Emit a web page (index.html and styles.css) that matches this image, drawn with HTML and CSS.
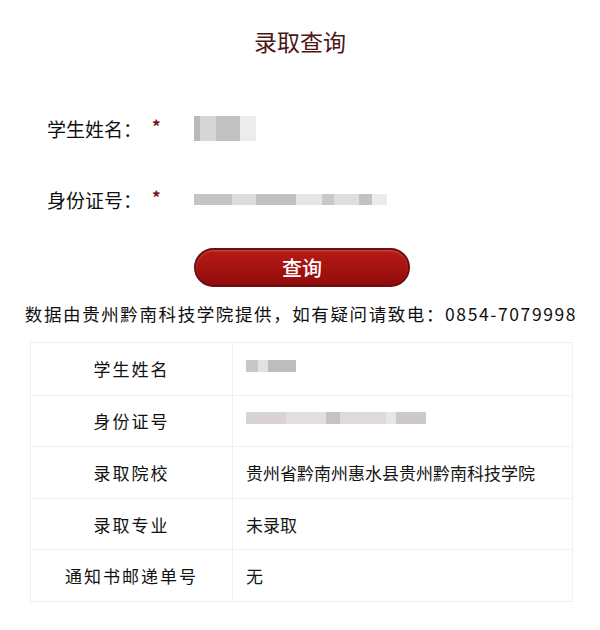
FILE: index.html
```html
<!DOCTYPE html>
<html lang="zh-CN">
<head>
<meta charset="utf-8">
<title>录取查询</title>
<link rel="stylesheet" href="styles.css">
</head>
<body>
<div class="page">
  <h1 class="title">录取查询</h1>
  <div class="form">
    <div class="form-row">
      <span class="label">学生姓名：</span><span class="star">*</span>
      <span class="blur blur-name"></span>
    </div>
    <div class="form-row">
      <span class="label">身份证号：</span><span class="star">*</span>
      <span class="blur blur-id"></span>
    </div>
  </div>
  <div class="btn-wrap"><button class="btn">查询</button></div>
  <p class="info">数据由贵州黔南科技学院提供，如有疑问请致电：0854-7079998</p>
  <div class="table">
    <div class="row">
      <div class="cell key">学生姓名</div>
      <div class="cell val"><span class="blur blur-tname"></span></div>
    </div>
    <div class="row">
      <div class="cell key">身份证号</div>
      <div class="cell val"><span class="blur blur-tid"></span></div>
    </div>
    <div class="row">
      <div class="cell key">录取院校</div>
      <div class="cell val">贵州省黔南州惠水县贵州黔南科技学院</div>
    </div>
    <div class="row">
      <div class="cell key">录取专业</div>
      <div class="cell val">未录取</div>
    </div>
    <div class="row">
      <div class="cell key">通知书邮递单号</div>
      <div class="cell val">无</div>
    </div>
  </div>
</div>
</body>
</html>
```

FILE: styles.css
```css
* { box-sizing: border-box; }
html, body {
  margin: 0;
  padding: 0;
  background: #ffffff;
}
body {
  font-family: "Noto Sans CJK SC", "Noto Sans", sans-serif;
  color: #1c1c1c;
}
.page {
  width: 600px;
  height: 630px;
  padding-top: 26px;
}
.title {
  margin: 0;
  text-align: center;
  font-size: 23px;
  line-height: 30px;
  font-weight: 400;
  color: #4e1618;
}
.form {
  margin-top: 52px;
  padding-left: 47px;
  display: flex;
  flex-direction: column;
  gap: 31px;
}
.form-row {
  display: flex;
  align-items: center;
  height: 40px;
}
.label {
  font-size: 19px;
  font-weight: 400;
  width: 99px;
  color: #0f0f0f;
}
.star {
  color: #7a1414;
  font-size: 17px;
  font-weight: 700;
  width: 48px;
  padding-left: 6px;
  margin-top: -6px;
}
.blur { display: inline-block; }
.blur-name {
  width: 62px;
  height: 25px;
  background: linear-gradient(90deg,
    #b9b9b9 0 6px, #d6d6d6 6px 22px, #c2c2c2 22px 46px, #ececec 46px 62px);
}
.blur-id {
  width: 193px;
  height: 11px;
  background: linear-gradient(90deg,
    #c4c4c4 0 38px, #dcdcdc 38px 62px, #c0c0c0 62px 102px, #e6e6e6 102px 128px,
    #c9c9c9 128px 140px, #dedede 140px 165px, #c2c2c2 165px 178px, #ebebeb 178px 193px);
}
.btn-wrap {
  margin-top: 29px;
  display: flex;
  justify-content: center;
  padding-left: 4px;
}
.btn {
  width: 216px;
  height: 39px;
  border-radius: 20px;
  border: 2px solid #6e0d0d;
  background: linear-gradient(180deg, #b51a16 0%, #a41210 55%, #8e0c0b 100%);
  box-shadow: inset 0 1px 2px rgba(255, 255, 255, 0.25);
  color: #ffffff;
  font-family: "Noto Sans CJK SC", sans-serif;
  font-size: 20px;
  font-weight: 500;
  line-height: 1;
  padding: 0;
}
.info {
  margin: 14px 0 0;
  text-align: center;
  font-size: 17.5px;
  font-weight: 400;
  letter-spacing: 1.6px;
  line-height: 26px;
  color: #0f0f0f;
  padding-left: 2px;
}
.table {
  margin: 15px 0 0 30px;
  width: 543px;
  border: 1px solid #f0f0f0;
  display: flex;
  flex-direction: column;
}
.row {
  display: flex;
  height: 51.6px;
  border-top: 1px solid #f0f0f0;
}
.row:first-child { border-top: none; }
.cell {
  display: flex;
  align-items: center;
}
.key {
  width: 202px;
  justify-content: center;
  font-size: 17px;
  font-weight: 400;
  letter-spacing: 2px;
  border-right: 1px solid #f0f0f0;
  color: #111111;
}
.val {
  flex: 1;
  padding-left: 13px;
  font-size: 17px;
  color: #151515;
}
.blur-tname {
  width: 50px;
  height: 12px;
  margin-top: -6px;
  background: linear-gradient(90deg,
    #c8c8c8 0 12px, #e2e2e2 12px 22px, #bdbdbd 22px 50px);
}
.blur-tid {
  width: 180px;
  height: 12px;
  margin-top: -6px;
  background: linear-gradient(90deg,
    #d9d3d5 0 40px, #e3dedf 40px 80px, #c6c2c3 80px 94px, #dedada 94px 140px,
    #e8e6e6 140px 150px, #cdc9ca 150px 180px);
}
```
